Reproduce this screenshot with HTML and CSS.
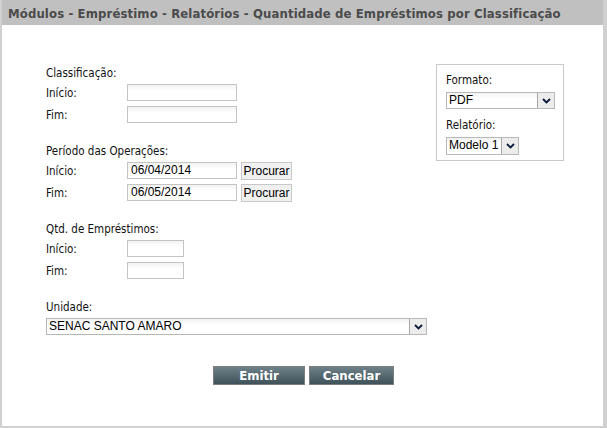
FILE: index.html
```html
<!DOCTYPE html>
<html lang="pt">
<head>
<meta charset="utf-8">
<title>Relatórios</title>
<link rel="stylesheet" href="styles.css">
</head>
<body>
<div class="window">
  <div class="header">Módulos - Empréstimo - Relatórios - Quantidade de Empréstimos por Classificação</div>
  <div class="content">
    <div class="main">
      <div class="form">
        <div class="group">
          <div class="title">Classificação:</div>
          <div class="row"><span class="lbl">Início:</span><span class="input w110"></span></div>
          <div class="row"><span class="lbl">Fim:</span><span class="input w110"></span></div>
        </div>
        <div class="group">
          <div class="title">Período das Operações:</div>
          <div class="row"><span class="lbl">Início:</span><span class="input w110">06/04/2014</span><span class="btn">Procurar</span></div>
          <div class="row"><span class="lbl">Fim:</span><span class="input w110">06/05/2014</span><span class="btn">Procurar</span></div>
        </div>
        <div class="group">
          <div class="title">Qtd. de Empréstimos:</div>
          <div class="row"><span class="lbl">Início:</span><span class="input w57"></span></div>
          <div class="row"><span class="lbl">Fim:</span><span class="input w57"></span></div>
        </div>
        <div class="group last">
          <div class="title">Unidade:</div>
          <div class="select wide"><span class="val">SENAC SANTO AMARO</span><span class="arrow"><svg width="9" height="6" viewBox="0 0 9 6"><path d="M1 1 L4.5 4.5 L8 1" fill="none" stroke="#0a1a3a" stroke-width="1.8"/></svg></span></div>
        </div>
      </div>
      <div class="side">
        <div class="title">Formato:</div>
        <div class="select fmt"><span class="val">PDF</span><span class="arrow"><svg width="9" height="6" viewBox="0 0 9 6"><path d="M1 1 L4.5 4.5 L8 1" fill="none" stroke="#0a1a3a" stroke-width="1.8"/></svg></span></div>
        <div class="title t2">Relatório:</div>
        <div class="select mdl"><span class="val">Modelo 1</span><span class="arrow"><svg width="9" height="6" viewBox="0 0 9 6"><path d="M1 1 L4.5 4.5 L8 1" fill="none" stroke="#0a1a3a" stroke-width="1.8"/></svg></span></div>
      </div>
    </div>
    <div class="actions">
      <span class="action emitir">Emitir</span>
      <span class="action cancelar">Cancelar</span>
    </div>
  </div>
</div>
</body>
</html>
```
FILE: styles.css
```css
html, body {
  margin: 0;
  padding: 0;
  background: #ffffff;
}
.window {
  width: 607px;
  height: 428px;
  box-sizing: border-box;
  border-left: 2px solid #d0d0d0;
  border-right: 4px solid #d0d0d0;
  border-bottom: 2px solid #d0d0d0;
  background: #ffffff;
  display: flex;
  flex-direction: column;
}
.header {
  height: 25px;
  background: #c0c0c0;
  color: #4b4b4b;
  font-family: "DejaVu Sans Condensed", "DejaVu Sans", sans-serif;
  font-weight: bold;
  font-size: 13px;
  letter-spacing: 0.12px;
  line-height: 27px;
  padding-left: 6px;
  white-space: nowrap;
  overflow: hidden;
}
.content {
  padding: 41px 0 0 44px;
  font-family: "DejaVu Sans Condensed", "DejaVu Sans", sans-serif;
  font-size: 11.5px;
  color: #111;
}
.main {
  display: flex;
}
.form {
  width: 390px;
}
.group {
  margin-bottom: 21px;
}
.group.last {
  margin-bottom: 0;
}
.title {
  height: 15px;
  line-height: 15px;
  margin-bottom: 3px;
}
.row {
  display: flex;
  align-items: center;
  height: 17px;
  margin-bottom: 5px;
}
.lbl {
  width: 81px;
}
.input {
  box-sizing: border-box;
  height: 17px;
  border: 1px solid #c4c4c4;
  background: linear-gradient(#f2f2f2, #ffffff 40%);
  font-family: "Liberation Sans", Arial, sans-serif;
  font-size: 12px;
  line-height: 15px;
  padding-left: 3px;
  color: #000;
}
.w110 { width: 110px; }
.w57 { width: 57px; }
.btn {
  box-sizing: border-box;
  margin-left: 4px;
  height: 18px;
  width: 51px;
  border: 1px solid #c8c8c8;
  background: #f0f0f0;
  font-family: "Liberation Sans", Arial, sans-serif;
  font-size: 12px;
  line-height: 16px;
  text-align: center;
  color: #000;
}
.select {
  box-sizing: border-box;
  display: flex;
  height: 17px;
  border: 1px solid #b8b8b8;
  background: linear-gradient(#f2f2f2, #ffffff 40%);
  font-family: "Liberation Sans", Arial, sans-serif;
  font-size: 12px;
  color: #000;
}
.select .val {
  flex: 1;
  padding-left: 2px;
  line-height: 15px;
  white-space: nowrap;
  overflow: hidden;
}
.select .arrow {
  box-sizing: border-box;
  width: 17px;
  height: 15px;
  border-left: 1px solid #a8a8a8;
  background: #ececec;
  display: flex;
  align-items: center;
  justify-content: center;
}
.wide { width: 381px; }
.side {
  box-sizing: border-box;
  margin-top: -2px;
  width: 128px;
  height: 97px;
  border: 1px solid #c8c8c8;
  padding: 8px 0 0 9px;
}
.side .title { margin-bottom: 4px; }
.side .t2 { margin-top: 9px; }
.fmt { width: 109px; }
.mdl { width: 73px; height: 18px; }
.mdl .arrow { height: 16px; }
.actions {
  display: flex;
  gap: 4px;
  padding-left: 167px;
  margin-top: 31px;
}
.action {
  box-sizing: border-box;
  height: 19px;
  border: 1px solid #7d7d7d;
  background: linear-gradient(#6e8088, #3f5259);
  color: #ffffff;
  font-family: "DejaVu Sans Condensed", "DejaVu Sans", sans-serif;
  font-weight: bold;
  font-size: 13px;
  line-height: 17px;
  text-align: center;
}
.emitir { width: 92px; }
.cancelar { width: 85px; }
```
